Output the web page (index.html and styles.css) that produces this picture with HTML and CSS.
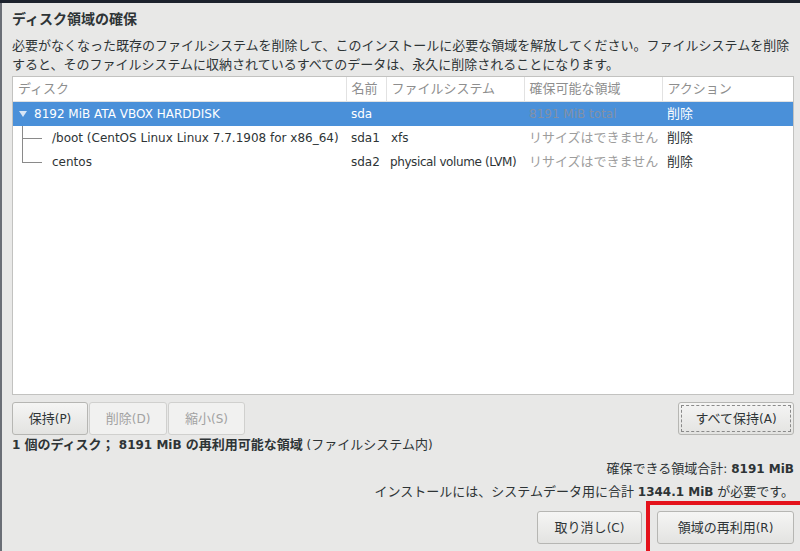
FILE: index.html
```html
<!DOCTYPE html>
<html lang="ja">
<head>
<meta charset="utf-8">
<title>ディスク領域の確保</title>
<link rel="stylesheet" href="styles.css">
</head>
<body>
<div class="topbar"></div>
<div class="dialog">
  <h1 class="title">ディスク領域の確保</h1>
  <p class="desc">必要がなくなった既存のファイルシステムを削除して、このインストールに必要な領域を解放してください。ファイルシステムを削除すると、そのファイルシステムに収納されているすべてのデータは、永久に削除されることになります。</p>
  <div class="tree">
    <table>
      <colgroup>
        <col class="c-disk"><col class="c-name"><col class="c-fs"><col class="c-space"><col class="c-act">
      </colgroup>
      <thead>
        <tr><th>ディスク</th><th>名前</th><th>ファイルシステム</th><th>確保可能な領域</th><th class="last">アクション</th></tr>
      </thead>
      <tbody>
        <tr class="sel">
          <td class="disk en"><span class="tri"></span>8192 MiB ATA VBOX HARDDISK</td>
          <td class="en">sda</td><td></td><td class="total-sel en">8191 MiB total</td><td>削除</td>
        </tr>
        <tr>
          <td class="child mid en">/boot (CentOS Linux Linux 7.7.1908 for x86_64)</td>
          <td class="en">sda1</td><td class="en">xfs</td><td class="muted">リサイズはできません</td><td>削除</td>
        </tr>
        <tr>
          <td class="child end en">centos</td>
          <td class="en">sda2</td><td class="en tight">physical volume (LVM)</td><td class="muted">リサイズはできません</td><td>削除</td>
        </tr>
      </tbody>
    </table>
  </div>
  <div class="actions">
    <div class="group">
      <button class="btn w-keep">保持<span class="en">(P)</span></button>
      <button class="btn w-del" disabled>削除<span class="en">(D)</span></button>
      <button class="btn w-shrink" disabled>縮小<span class="en">(S)</span></button>
    </div>
    <button class="btn focus w-all">すべて保持<span class="en">(A)</span></button>
  </div>
  <p class="summary"><b><span class="en">1 </span>個のディスク；<span class="en"> 8191 MiB </span>の再利用可能な領域</b><span class="en"> (</span>ファイルシステム内<span class="en">)</span></p>
  <p class="right line-total">確保できる領域合計<span class="en">: <b>8191 MiB</b></span></p>
  <p class="right line-need">インストールには、システムデータ用に合計<span class="en"> <b>1344.1 MiB</b> </span>が必要です。</p>
  <div class="footer">
    <button class="btn big w-cancel">取り消し<span class="en">(C)</span></button>
    <button class="btn big w-reuse">領域の再利用<span class="en">(R)</span></button>
  </div>
</div>
<div class="highlight"></div>
</body>
</html>
```

FILE: styles.css
```css
html, body {
  margin: 0;
  padding: 0;
}
body {
  width: 800px;
  height: 551px;
  overflow: hidden;
  position: relative;
  background: #e8e8e7;
  font-family: "DejaVu Sans", "Noto Sans CJK JP", sans-serif;
  font-size: 13px;
  color: #2e3436;
  display: flex;
  flex-direction: column;
}
.en {
  font-size: 12px;
}
.topbar {
  height: 3px;
  background: #1c222d;
  flex: none;
}
.dialog {
  flex: 1;
  border-left: 2px solid #6a6e76;
  padding: 0 6px 0 10px;
  display: flex;
  flex-direction: column;
}
.title {
  margin: 6px 0 0;
  font-size: 14px;
  font-weight: bold;
  line-height: 20px;
}
.desc {
  margin: 7px 0 0;
  line-height: 19px;
}
.tree {
  margin-top: 2px;
  height: 319px;
  box-sizing: border-box;
  border: 1px solid #c2c2c0;
  background: #fff;
}
table {
  width: 100%;
  border-collapse: collapse;
  table-layout: fixed;
}
.c-disk { width: 333px; }
.c-name { width: 40px; }
.c-fs { width: 138px; }
.c-space { width: 138px; }
.c-act { width: auto; }
th {
  height: 24px;
  padding: 0 0 0 5px;
  text-align: left;
  font-weight: normal;
  color: #8e8e8e;
  border-right: 1px solid #e2e2e2;
  border-bottom: 1px solid #e2e2e2;
  line-height: 24px;
  white-space: nowrap;
  overflow: hidden;
}
th.last { border-right: none; }
td {
  height: 24px;
  padding: 0 0 0 5px;
  line-height: 24px;
  white-space: nowrap;
  overflow: hidden;
}
td.tight {
  letter-spacing: -0.4px;
  padding-left: 4px;
}
tr.sel td {
  background: #4a90d9;
  color: #fff;
}
tr.sel td.total-sel { color: #8290a6; }
td.muted { color: #9d9d9d; }
td.disk { padding-left: 6px; }
.tri {
  display: inline-block;
  width: 0;
  height: 0;
  border-left: 4px solid transparent;
  border-right: 4px solid transparent;
  border-top: 6px solid #d8e6f6;
  margin-right: 7px;
  vertical-align: 1px;
}
td.child {
  position: relative;
  padding-left: 39px;
}
td.child::before {
  content: "";
  position: absolute;
  left: 9px;
  top: 0;
  width: 1px;
  background: #8a8a8a;
}
td.mid::before { bottom: 0; }
td.end::before { height: 12px; }
td.child::after {
  content: "";
  position: absolute;
  left: 9px;
  top: 12px;
  width: 20px;
  height: 1px;
  background: #8a8a8a;
}
.actions {
  margin-top: 7px;
  display: flex;
  justify-content: space-between;
}
.group {
  display: flex;
  gap: 1px;
}
.btn {
  font: inherit;
  height: 33px;
  box-sizing: border-box;
  padding: 0;
  border: 1px solid #b6b6b3;
  border-radius: 3px;
  background: linear-gradient(#f5f5f4, #e3e3e1);
  color: #2e3436;
  line-height: 31px;
}
.btn:disabled {
  background: #f1f1f0;
  border-color: #d0d0ce;
  color: #a2a2a2;
}
.w-keep { width: 76px; }
.w-del { width: 78px; }
.w-shrink { width: 77px; }
.w-all { width: 116px; }
.focus {
  outline: 1px dashed #8a8a8a;
  outline-offset: -4px;
}
.summary {
  margin: 1px 0 0;
  line-height: 18px;
}
.right {
  text-align: right;
  margin: 0;
  line-height: 18px;
}
.line-total { margin-top: 6px; }
.line-need { margin-top: 5px; }
.footer {
  margin-top: 10px;
  display: flex;
  justify-content: flex-end;
  gap: 15px;
}
.w-cancel { width: 105px; }
.w-reuse { width: 137px; }
.highlight {
  position: absolute;
  left: 646px;
  top: 501px;
  width: 158px;
  height: 60px;
  box-sizing: border-box;
  border: 4px solid #e4121b;
}
```
